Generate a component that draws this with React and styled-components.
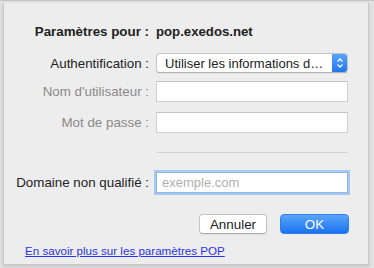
import React from "react";
import styled, { createGlobalStyle } from "styled-components";

const Global = createGlobalStyle`
  html, body {
    margin: 0;
    padding: 0;
    background: #dedede;
  }
  body {
    font-family: "Liberation Sans", "Noto Sans", sans-serif;
    font-size: 13px;
    color: #222;
  }
`;

const Screen = styled.div`
  width: 374px;
  height: 268px;
  overflow: hidden;
  box-sizing: border-box;
  padding: 3px 5px 0 3px;
  background: linear-gradient(#c4c4c4, #c4c4c4) top / 100% 1px no-repeat, #e2e2e2;
`;

const Sheet = styled.div`
  box-sizing: border-box;
  height: 262px;
  background: #ededed;
  border-left: 1px solid #c9c9c9;
  border-right: 1px solid #c9c9c9;
  border-bottom: 1px solid #c9c9c9;
  box-shadow: 0 2px 4px rgba(0, 0, 0, 0.12);
  padding: 21px 0 0 0;
`;

const Form = styled.div`
  display: grid;
  grid-template-columns: 145px 192px;
  column-gap: 7px;
  align-items: center;
`;

const Label = styled.div`
  text-align: right;
  white-space: nowrap;
  font-size: 13.35px;
  margin-top: ${(p) => p.$top || 0}px;
  color: ${(p) => (p.$disabled ? "#8a8a8a" : "#222")};
  font-weight: ${(p) => (p.$bold ? 700 : 400)};
`;

const Value = styled.div`
  font-weight: 700;
  font-size: 13.2px;
  padding-left: 0;
`;

const Header = styled.div`
  display: contents;
`;

const Select = styled.div`
  height: 20px;
  box-sizing: border-box;
  margin-top: 14px;
  background: #fff;
  border: 1px solid #c5c5c5;
  border-bottom-color: #b2b2b2;
  border-radius: 4px;
  display: flex;
  align-items: center;
  padding-left: 8px;
  overflow: hidden;
  box-shadow: 0 1px 1px rgba(0, 0, 0, 0.06);
`;

const SelectText = styled.span`
  flex: 1;
  white-space: nowrap;
`;

const Stepper = styled.div`
  width: 16px;
  align-self: stretch;
  margin: -1px -1px -1px 0;
  background: linear-gradient(#5ea6fb, #1b74f0);
  border-radius: 0 4px 4px 0;
  display: flex;
  align-items: center;
  justify-content: center;
`;

const Field = styled.div`
  height: 21px;
  box-sizing: border-box;
  margin-top: ${(p) => p.$top || 0}px;
  background: #fff;
  border: 1px solid #cfcfcf;
  border-top-color: #c4c4c4;
  color: #aaa;
  display: flex;
  align-items: center;
  padding-left: 5px;
`;

const FocusField = styled(Field)`
  border: 1px solid #8fb6e6;
  box-shadow: 0 0 0 2px #a6c8f2;
  color: #b0b0b0;
`;

const Separator = styled.div`
  grid-column: 2;
  height: 1px;
  background: #d4d4d4;
  margin: 19px 0 19px 1px;
`;

const Spacer = styled.div``;

const Buttons = styled.div`
  display: flex;
  justify-content: flex-end;
  gap: 13px;
  width: 345px;
  margin-top: 21px;
`;

const Button = styled.div`
  width: ${(p) => p.$w}px;
  height: 20px;
  box-sizing: border-box;
  border-radius: 4px;
  display: flex;
  align-items: center;
  justify-content: center;
  font-size: 13.4px;
  ${(p) =>
    p.$primary
      ? `
    background: linear-gradient(#5aa6fc, #1a73f0);
    color: #fff;
    border: 1px solid #2d7ff0;
  `
      : `
    background: #fff;
    color: #222;
    border: 1px solid #c3c3c3;
    border-bottom-color: #ababab;
    box-shadow: 0 1px 1px rgba(0,0,0,0.05);
  `}
`;

const Link = styled.a`
  display: inline-block;
  margin: 10px 0 0 21px;
  font-size: 11.6px;
  color: #2a33e8;
  text-decoration: underline;
`;

const Chevrons = () => (
  <svg width="8" height="12" viewBox="0 0 8 12">
    <path d="M1.5 4.5 L4 2 L6.5 4.5" fill="none" stroke="#fff" strokeWidth="1.3" />
    <path d="M1.5 7.5 L4 10 L6.5 7.5" fill="none" stroke="#fff" strokeWidth="1.3" />
  </svg>
);

export default function App() {
  return (
    <>
      <Global />
      <Screen>
        <Sheet>
          <Form>
            <Header>
              <Label $bold>Paramètres pour :</Label>
              <Value>pop.exedos.net</Value>
            </Header>
            <Label $top={14}>Authentification :</Label>
            <Select>
              <SelectText>Utiliser les informations d…</SelectText>
              <Stepper>
                <Chevrons />
              </Stepper>
            </Select>
            <Label $disabled $top={8}>Nom d'utilisateur :</Label>
            <Field $top={8} />
            <Label $disabled $top={10}>Mot de passe :</Label>
            <Field $top={10} />
            <Spacer />
            <Separator />
            <Label>Domaine non qualifié :</Label>
            <FocusField>exemple.com</FocusField>
          </Form>
          <Buttons>
            <Button $w={68}>Annuler</Button>
            <Button $w={69} $primary>OK</Button>
          </Buttons>
          <Link href="#">En savoir plus sur les paramètres POP</Link>
        </Sheet>
      </Screen>
    </>
  );
}
